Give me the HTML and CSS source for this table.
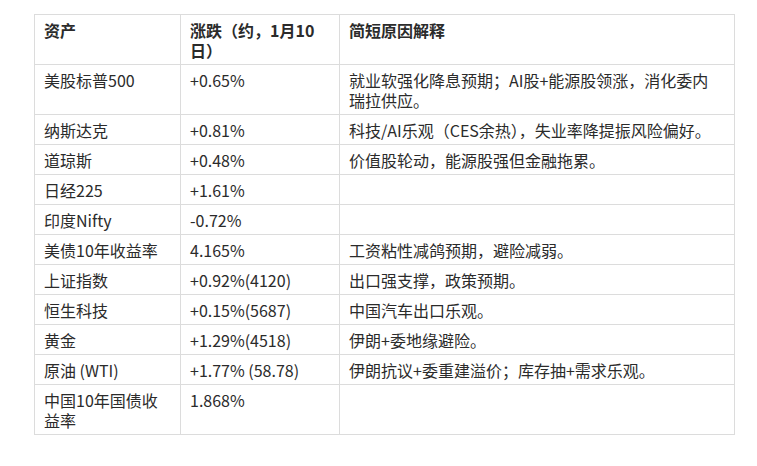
FILE: index.html
```html
<!DOCTYPE html>
<html lang="zh-CN">
<head>
<meta charset="utf-8">
<link rel="stylesheet" href="styles.css">
</head>
<body>
<div class="wrap">
<table class="tbl">
<colgroup><col class="c1"><col class="c2"><col class="c3"></colgroup>
<thead>
<tr><th>资产</th><th>涨跌（约，1月10日）</th><th class="why">简短原因解释</th></tr>
</thead>
<tbody>
<tr><td>美股标普500</td><td>+0.65%</td><td class="why">就业软强化降息预期；AI股+能源股领涨，消化委内瑞拉供应。</td></tr>
<tr><td>纳斯达克</td><td>+0.81%</td><td class="why">科技/AI乐观（CES余热），失业率降提振风险偏好。</td></tr>
<tr><td>道琼斯</td><td>+0.48%</td><td class="why">价值股轮动，能源股强但金融拖累。</td></tr>
<tr><td>日经225</td><td>+1.61%</td><td class="why"></td></tr>
<tr><td>印度Nifty</td><td>-0.72%</td><td class="why"></td></tr>
<tr><td>美债10年收益率</td><td>4.165%</td><td class="why">工资粘性减鸽预期，避险减弱。</td></tr>
<tr><td>上证指数</td><td>+0.92%(4120)</td><td class="why">出口强支撑，政策预期。</td></tr>
<tr><td>恒生科技</td><td>+0.15%(5687)</td><td class="why">中国汽车出口乐观。</td></tr>
<tr><td>黄金</td><td>+1.29%(4518)</td><td class="why">伊朗+委地缘避险。</td></tr>
<tr><td>原油 (WTI)</td><td>+1.77% (58.78)</td><td class="why">伊朗抗议+委重建溢价；库存抽+需求乐观。</td></tr>
<tr><td>中国10年国债收益率</td><td>1.868%</td><td class="why"></td></tr>
</tbody>
</table>
</div>
</body>
</html>
```
FILE: styles.css
```css
html, body {
  margin: 0;
  padding: 0;
  background: #fff;
}
.wrap {
  padding: 14px 0 0 34px;
}
.tbl {
  border-collapse: collapse;
  table-layout: fixed;
  width: 700px;
  font-family: "Noto Sans CJK SC", "Microsoft YaHei", sans-serif;
  font-size: 16px;
  line-height: 20px;
  color: #2b2b2b;
}
.c1 { width: 146px; }
.c2 { width: 159px; }
.c3 { width: 395px; }
.tbl th, .tbl td {
  border: 1px solid #dcdcdc;
  padding: 5px 9px 4px 9px;
  text-align: left;
  vertical-align: top;
}
.tbl .why {
  padding-right: 16px;
}
.tbl th {
  font-weight: bold;
}
```
